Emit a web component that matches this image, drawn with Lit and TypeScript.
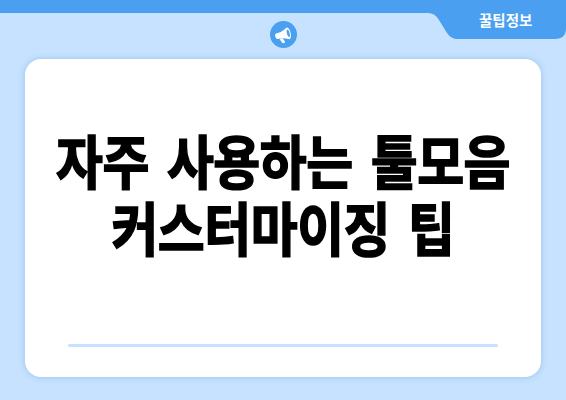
import { LitElement, html, css } from "lit";
import { customElement } from "lit/decorators.js";

@customElement("app-root")
export class AppRoot extends LitElement {
  static styles = css`
    :host {
      display: block;
      width: 566px;
      height: 400px;
      font-family: "Noto Sans CJK KR", "Noto Sans", sans-serif;
    }
    .page {
      position: relative;
      box-sizing: border-box;
      width: 566px;
      height: 400px;
      background: #c6e2ff;
      padding: 59px 25px 23px 25px;
      overflow: hidden;
    }
    .tab-shape {
      position: absolute;
      top: 0;
      left: 0;
      display: block;
    }
    .tab-label {
      position: absolute;
      top: 10px;
      left: 479px;
      font-size: 14.5px;
      line-height: 20px;
      font-weight: 700;
      color: #ffffff;
    }
    .badge {
      position: absolute;
      top: 21px;
      left: 270px;
      width: 27px;
      height: 27px;
      display: block;
    }
    .card {
      box-sizing: border-box;
      height: 318px;
      background: #ffffff;
      border-radius: 16px;
      box-shadow: 0 0 6px rgba(80, 130, 190, 0.35);
      display: flex;
      flex-direction: column;
      align-items: center;
      padding: 0 20px 30px;
    }
    .title {
      flex: 1;
      display: flex;
      align-items: center;
      justify-content: center;
      margin: 0;
      padding-bottom: 18px;
      font-size: 58px;
      line-height: 67px;
      font-weight: 700;
      letter-spacing: -0.6px;
      word-spacing: 8px;
      -webkit-text-stroke: 1.6px #000;
      color: #000000;
      text-align: center;
      white-space: pre;
      transform: scaleX(0.88);
    }
    .rule {
      width: 430px;
      height: 3px;
      border-radius: 2px;
      background: #c6e2ff;
    }
  `;

  render() {
    return html`
      <div class="page">
        <svg class="tab-shape" width="566" height="40" viewBox="0 0 566 40">
          <path fill="#4a9ff0" d="M0 0H566V28Q566 39 555 39H458Q451 39 447 33L439 20Q435 13 428 13H0Z" />
        </svg>
        <span class="tab-label">꿀팁정보</span>
        <svg class="badge" viewBox="0 0 27 27">
          <circle cx="13.5" cy="13.5" r="13.5" fill="#4a9ff0" />
          <g transform="rotate(-14 13.5 13.5)">
            <path fill="#fff" d="M7 10.6 H11 L18 7.8 V19.2 L11 16.4 H7 Q5 16.4 5 13.5 Q5 10.6 7 10.6Z" />
            <path fill="#fff" d="M8.5 16.6 H11.8 L13.2 21 Q13.2 21.8 12.4 21.8 H11 Q10.4 21.8 10.2 21.2 Z" />
            <ellipse cx="18.2" cy="13.5" rx="2.6" ry="5.9" fill="#fff" />
            <ellipse cx="18.4" cy="13.5" rx="1.3" ry="3.9" fill="#4a9ff0" />
          </g>
        </svg>
        <div class="card">
          <h1 class="title">자주 사용하는 툴모음
커스터마이징 팁</h1>
          <div class="rule"></div>
        </div>
      </div>
    `;
  }
}
